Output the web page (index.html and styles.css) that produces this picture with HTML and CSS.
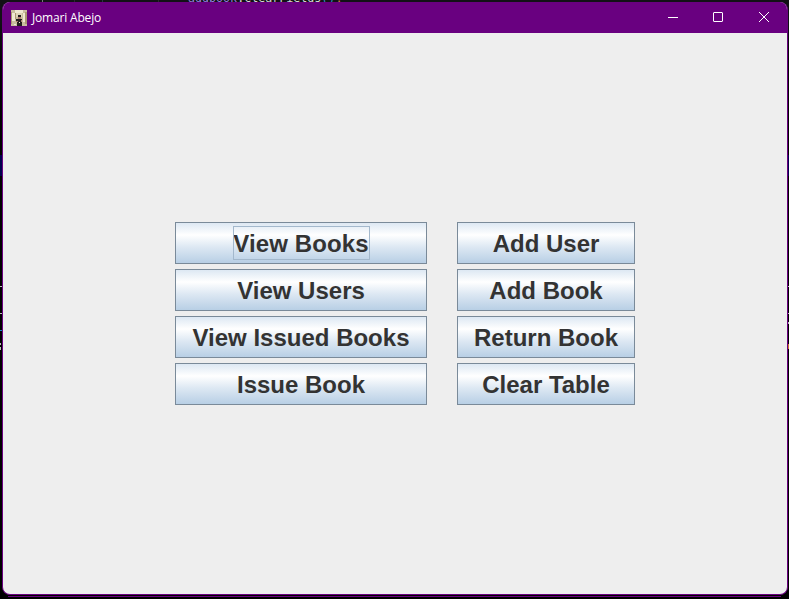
FILE: index.html
```html
<!DOCTYPE html>
<html lang="en">
<head>
<meta charset="utf-8">
<title>Jomari Abejo</title>
<link rel="stylesheet" href="styles.css">
</head>
<body>
<div class="desktop">
  <div class="editor" aria-hidden="true">
    <i class="guide g1"></i><i class="guide g2"></i><i class="guide g3"></i><i class="guide g4"></i>
    <div class="code"><span class="obj">addbook</span>.clearFields<span class="paren">()</span><span class="semi">;</span></div>
    <i class="selection left"></i><i class="selection right"></i>
    <i class="mark m1"></i><i class="mark m2"></i><i class="mark m3"></i><i class="mark m4"></i>
    <i class="mark m5"></i><i class="mark m6"></i><i class="mark m7"></i><i class="mark m8"></i><i class="mark m9"></i>
  </div>
  <div class="window">
    <header class="titlebar">
      <svg class="app-icon" width="16" height="16" viewBox="0 0 16 16" shape-rendering="crispEdges">
        <path fill="#c9bd9f" d="M0 0h16v16H0z"/>
        <path fill="#f0e8d2" d="M4 0h8v3H4zM1 3h3v8H1zM12 3h2v9h-2z"/>
        <path fill="#aa9872" d="M0 2h1v12H0zM14 2h2v12h-2zM4 3h1v6H4z"/>
        <path fill="#ded2b6" d="M5 3h6v4H5z"/>
        <path fill="#241e20" d="M7 5h3v2H7zM5 9h6v3H5zM6 12h5v4H6z"/>
        <path fill="#b08070" d="M7 7h3v2H7zM5 11h2v1H5zM10 10h1v2h-1z"/>
        <path fill="#eee8da" d="M8 12h1v1H8zM3 14h2v1H3z"/>
      </svg>
      <span class="title">Jomari Abejo</span>
      <div class="controls">
        <svg width="46" height="31" viewBox="0 0 46 31"><path d="M18 15.5h10"/></svg>
        <svg width="46" height="31" viewBox="0 0 46 31"><rect x="17.5" y="10.5" width="9" height="9" rx=".5"/></svg>
        <svg width="46" height="31" viewBox="0 0 46 31"><path d="M17 10l10 10M27 10L17 20"/></svg>
      </div>
    </header>
    <main class="content">
      <div class="column wide">
        <button><span class="focus">View Books</span></button>
        <button>View Users</button>
        <button>View Issued Books</button>
        <button>Issue Book</button>
      </div>
      <div class="column narrow">
        <button>Add User</button>
        <button>Add Book</button>
        <button>Return Book</button>
        <button>Clear Table</button>
      </div>
    </main>
  </div>
</div>
</body>
</html>
```
FILE: styles.css
```css
* { box-sizing: border-box; }
body { margin: 0; }
.desktop {
  position: relative;
  width: 789px;
  height: 599px;
  padding: 2px 1px 4px 2px;
  overflow: hidden;
  background: linear-gradient(#121116 0, #121116 20px, #050306 60px, #000 140px);
}
.editor { position: absolute; inset: 0; }
.editor i { position: absolute; }
.guide { top: 0; width: 1px; height: 2px; background: #29282d; }
.g1 { left: 42px; background: #77767a; }
.g2 { left: 74px; }
.g3 { left: 102px; background: #2a3146; }
.g4 { left: 158px; }
.code {
  position: absolute;
  left: 188px;
  top: -9px;
  font: 11.67px/14px "DejaVu Sans Mono", "Liberation Mono", monospace;
  color: #d4d4d4;
}
.obj { color: #8f7fd8; }
.paren { color: #2f8fc0; }
.semi { color: #d07840; }
.selection { width: 2px; background: #00004d; }
.selection.left { left: 0; top: 155px; height: 21px; }
.selection.right { right: 0; top: 155px; height: 21px; width: 1px; }
.mark { width: 2px; height: 1px; background: #bbb; }
.m1 { left: 0; top: 286px; }
.m2 { left: 0; top: 313px; }
.m3 { left: 0; top: 330px; background: #1684c8; }
.m4 { left: 0; top: 343px; width: 1px; height: 2px; }
.m5 { left: 0; top: 347px; width: 1px; height: 3px; }
.m6 { left: 788px; top: 286px; }
.m7 { left: 788px; top: 322px; height: 2px; }
.m8 { left: 788px; top: 344px; height: 5px; background: #c87830; }
.m9 { left: 788px; top: 313px; }
.desktop::after {
  content: "";
  position: absolute;
  left: 8px;
  right: 8px;
  top: 596px;
  height: 1px;
  background: #690080;
}
.window {
  position: relative;
  display: flex;
  flex-direction: column;
  width: 786px;
  height: 593px;
  border: solid #690080;
  border-width: 0 1px 1px;
  border-radius: 8px;
  overflow: hidden;
  background: #eee;
}
.titlebar {
  display: flex;
  align-items: center;
  flex: 0 0 31px;
  padding-left: 8px;
  background: #690080;
}
.app-icon { flex: none; }
.title {
  margin-left: 5px;
  color: #fff;
  font: 12px/16px "Open Sans", "Noto Sans", sans-serif;
  letter-spacing: -0.18px;
}
.controls { display: flex; margin-left: auto; margin-right: -1px; }
.controls svg { display: block; fill: none; stroke: #fff; stroke-width: 1; }
.content {
  display: flex;
  align-items: flex-start;
  gap: 30px;
  padding: 189px 0 0 172px;
}
.column { display: grid; gap: 5px; }
.wide { width: 252px; }
.narrow { width: 178px; }
button {
  display: flex;
  align-items: center;
  justify-content: center;
  height: 42px;
  padding: 2px 0 0;
  border: 1px solid #7a8a99;
  border-radius: 0;
  background: linear-gradient(#dde8f3 0%, #fff 30%, #dde8f3 60%, #b8cfe5 100%);
  color: #333;
  font: bold 24px/28px "Liberation Sans", Arial, sans-serif;
  white-space: nowrap;
}
.focus {
  width: 137px;
  height: 34px;
  margin: -3px 0 0;
  padding: 4px 0 0;
  text-align: center;
  letter-spacing: 0.1px;
  outline: 1px solid #a3b8cc;
  outline-offset: -1px;
}
```
